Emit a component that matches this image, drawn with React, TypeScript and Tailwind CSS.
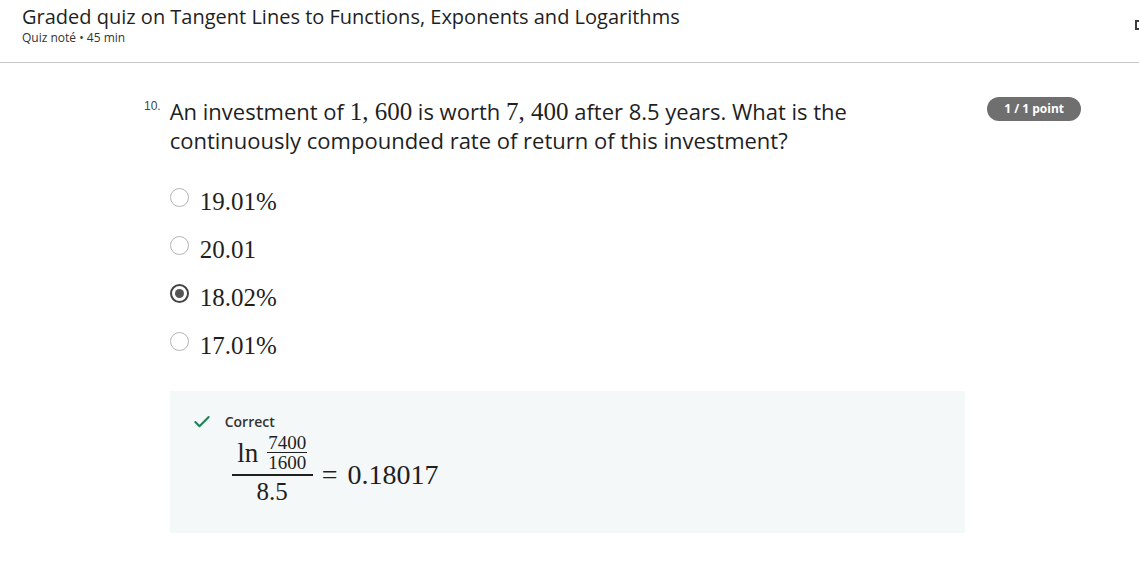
import { Check } from 'lucide-react'

const options = [
  { id: 'a', label: '19.01%', selected: false },
  { id: 'b', label: '20.01', selected: false },
  { id: 'c', label: '18.02%', selected: true },
  { id: 'd', label: '17.01%', selected: false },
]

const sans = { fontFamily: '"Open Sans", sans-serif' }
const serif = { fontFamily: '"Liberation Serif", "DejaVu Serif", serif' }

function Radio({ selected }: { selected: boolean }) {
  if (selected) {
    return (
      <span className="mt-[6px] flex h-[19px] w-[19px] items-center justify-center rounded-full border-2 border-[#444]">
        <span className="h-[9px] w-[9px] rounded-full bg-[#555]" />
      </span>
    )
  }
  return <span className="mt-[6px] h-[19px] w-[19px] rounded-full border border-[#b5b5b5] bg-white" />
}

export default function App() {
  return (
    <div className="relative h-[578px] w-[1139px] overflow-hidden bg-white" style={sans}>
      {/* Header */}
      <div className="h-[63px] border-b border-[#c8c8c8] pl-[22px] pt-[3px]">
        <h1 className="text-[20px] leading-[28px] text-[#1f1f1f]">
          Graded quiz on Tangent Lines to Functions, Exponents and Logarithms
        </h1>
        <p className="text-[12px] leading-[14px] text-[#333]">Quiz noté • 45 min</p>
      </div>
      <span className="absolute right-[-6px] top-[20px] h-[10px] w-[10px] border-2 border-[#3c3c3c]" />

      {/* Question */}
      <div className="flex pl-[144px] pr-[58px] pt-[34px]">
        <span
          className="mr-[9px] mt-[2px] text-[12px] leading-[14px] text-[#444]"
          style={{ fontFamily: '"Liberation Sans", sans-serif' }}
        >
          10.
        </span>
        <div className="flex-1">
          <div className="flex items-start justify-between">
            <p className="max-w-[730px] text-[22px] leading-[29px] text-[#1f1f1f]">
              An investment of{' '}
              <span className="text-[25px] leading-none" style={serif}>1, 600</span> is worth{' '}
              <span className="text-[25px] leading-none" style={serif}>7, 400</span> after 8.5 years. What is the
              continuously compounded rate of return of this investment?
            </p>
            <span className="rounded-full bg-[#6f6f6f] px-[17px] py-[4px] text-[12px] font-bold leading-[16px] text-white">
              1 / 1 point
            </span>
          </div>

          {/* Options */}
          <div className="mt-[27px] flex flex-col gap-[19px]">
            {options.map((o) => (
              <div key={o.id} className="flex h-[29px] items-start gap-[11px]">
                <Radio selected={o.selected} />
                <span className="pt-[5px] text-[25px] leading-[29px] text-[#1f1f1f]" style={serif}>
                  {o.label}
                </span>
              </div>
            ))}
          </div>

          {/* Feedback */}
          <div className="mt-[36px] h-[142px] w-[795px] bg-[#f5f8f8] pl-[22px] pt-[20px]">
            <div className="flex items-center gap-[13px]">
              <Check className="h-[20px] w-[20px] text-[#1f8354]" strokeWidth={2.5} />
              <span className="text-[14px] font-semibold text-[#333]">Correct</span>
            </div>
            <div className="ml-[40px] mt-[1px] flex items-center text-[#1f1f1f]" style={serif}>
              <div className="flex flex-col items-center">
                <div className="flex items-center gap-[9px] px-[1px] pb-[2px]">
                  <span className="text-[27px] leading-[30px]">ln</span>
                  <span className="flex flex-col items-center text-[19px] leading-[19px]">
                    <span>7400</span>
                    <span className="border-t border-[#1f1f1f] px-[1px]">1600</span>
                  </span>
                </div>
                <div className="w-[81px] border-t-2 border-[#1f1f1f] text-center text-[25px] leading-[32px]">
                  8.5
                </div>
              </div>
              <span className="ml-[9px] mt-[8px] flex items-center gap-[10px] text-[28px] leading-[32px]">
                <span>=</span>
                <span>0.18017</span>
              </span>
            </div>
          </div>
        </div>
      </div>
    </div>
  )
}
